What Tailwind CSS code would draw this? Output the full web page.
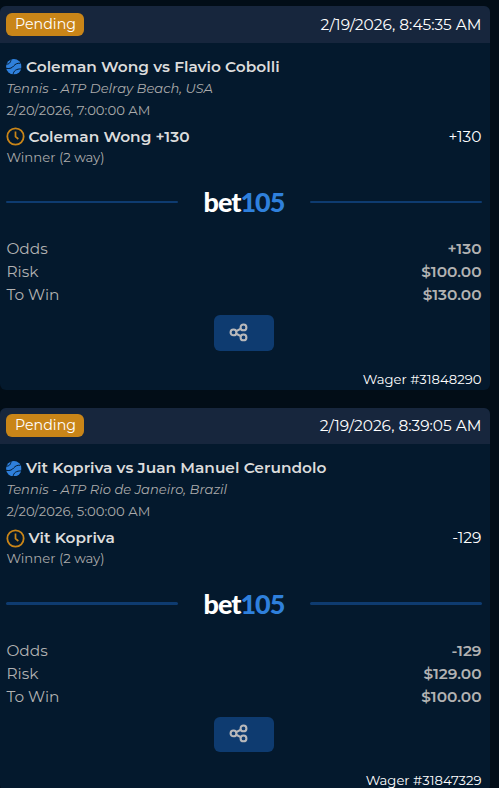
<!DOCTYPE html>
<html lang="en">
  <head>
    <meta charset="UTF-8" />
    <meta name="viewport" content="width=device-width, initial-scale=1.0" />
    <title>Pending wagers</title>
    <script src="https://cdn.jsdelivr.net/npm/@tailwindcss/browser@4"></script>
  </head>
  <body class="h-[788px] overflow-hidden bg-[#020d17] pt-1.5 font-[Montserrat,Inter,sans-serif] text-white">

    <!-- Shared icons -->
    <svg class="hidden">
      <symbol id="ball" viewBox="0 0 16 16">
        <circle cx="8" cy="8" r="7.9" fill="#2f80dc" />
        <path d="M0 5.2C3.2 5.6 5 3.6 5.2 0M0 9.6C4.6 10.4 6.4 8.8 8 7C9.6 5.2 11.4 4 14.8 4.4M7.4 16C7.4 12.4 10.6 9.8 16 10.2" fill="none" stroke="#04192d" stroke-width="1" />
      </symbol>
      <symbol id="clock" viewBox="0 0 20 20">
        <circle cx="10" cy="10" r="8.6" fill="none" stroke="#c98518" stroke-width="1.9" />
        <path d="M10 4.8V10.2L13 12.6" fill="none" stroke="#c98518" stroke-width="1.8" />
      </symbol>
      <symbol id="share" viewBox="0 0 20 20">
        <g fill="none" stroke="#b9b9bb" stroke-width="2.1">
          <circle cx="4.5" cy="10.4" r="2.9" />
          <circle cx="14.5" cy="5.4" r="2.9" />
          <circle cx="14.5" cy="15.4" r="2.9" />
          <path d="M7.2 9.1L11.8 6.7M7.2 11.7L11.8 14.1" />
        </g>
      </symbol>
    </svg>

    <!-- Wager 1 -->
    <article class="mb-[18px] h-[383.5px] w-[490px] overflow-hidden rounded-md bg-[#04192d]">
      <header class="flex h-[36.5px] items-center justify-between bg-[#17263d] pr-[8.5px] pl-1.5">
        <span class="flex h-[23px] w-[78px] items-center justify-center rounded-md bg-[#c98518] pl-px text-[14.2px]">Pending</span>
        <time class="text-[15.4px]">2/19/2026, 8:45:35 AM</time>
      </header>
      <section class="pt-[14px] pr-[8.5px] pl-[6.4px]">
        <div class="flex h-5 items-center gap-1">
          <svg class="mt-px size-[15.6px]"><use href="#ball" /></svg>
          <h2 class="text-[15.4px] font-semibold whitespace-nowrap text-[#dcdcdc]">Coleman Wong vs Flavio Cobolli</h2>
        </div>
        <p class="h-[22px] text-[13.1px] leading-[22px] text-[#ababab] italic">Tennis - ATP Delray Beach, USA</p>
        <p class="h-[22px] text-[13.2px] leading-[22px] text-[#ababab]">2/20/2026, 7:00:00 AM</p>
        <div class="mt-[5px] flex h-[22px] items-center">
          <svg class="mr-[3px] size-[19px]"><use href="#clock" /></svg>
          <strong class="text-[15.4px] font-semibold text-[#dcdcdc]">Coleman Wong +130</strong>
          <span class="ml-auto text-[15.4px]">+130</span>
        </div>
        <p class="h-5 text-[13.2px] leading-[19px] text-[#ababab]">Winner (2 way)</p>
        <div class="mt-[19.5px] flex h-[30px] items-center justify-between">
          <i class="h-0.5 w-[172px] rounded bg-[#0e3b70]"></i>
          <b class="font-[Lato,sans-serif] text-[27px] leading-[30px] font-black tracking-[-1px]">bet<span class="text-[#2f80dc]">105</span></b>
          <i class="h-0.5 w-[172px] rounded bg-[#0e3b70]"></i>
        </div>
        <dl class="mt-5 text-[15.4px] leading-[23px] text-[#b2b2b2]">
          <div class="flex justify-between"><dt>Odds</dt><dd class="font-semibold">+130</dd></div>
          <div class="flex justify-between"><dt>Risk</dt><dd class="font-semibold">$100.00</dd></div>
          <div class="flex justify-between"><dt>To Win</dt><dd class="font-semibold">$130.00</dd></div>
        </dl>
        <button class="mx-auto mt-[9px] flex h-9 w-15 rounded-md bg-[#0e3b70] pt-[7px] pl-[15px]" aria-label="Share">
          <svg class="size-5"><use href="#share" /></svg>
        </button>
        <p class="mt-[17.5px] text-right text-[13.2px] leading-5">Wager #31848290</p>
      </section>
    </article>

    <!-- Wager 2 -->
    <article class="h-[383.5px] w-[490px] overflow-hidden rounded-md bg-[#04192d]">
      <header class="flex h-[36.5px] items-center justify-between bg-[#17263d] pr-[8.5px] pl-1.5">
        <span class="flex h-[23px] w-[78px] items-center justify-center rounded-md bg-[#c98518] pl-px text-[14.2px]">Pending</span>
        <time class="text-[15.4px]">2/19/2026, 8:39:05 AM</time>
      </header>
      <section class="pt-[14px] pr-[8.5px] pl-[6.4px]">
        <div class="flex h-5 items-center gap-1">
          <svg class="mt-px size-[15.6px]"><use href="#ball" /></svg>
          <h2 class="text-[15.4px] font-semibold whitespace-nowrap text-[#dcdcdc]">Vit Kopriva vs Juan Manuel Cerundolo</h2>
        </div>
        <p class="h-[22px] text-[13.1px] leading-[22px] text-[#ababab] italic">Tennis - ATP Rio de Janeiro, Brazil</p>
        <p class="h-[22px] text-[13.2px] leading-[22px] text-[#ababab]">2/20/2026, 5:00:00 AM</p>
        <div class="mt-[5px] flex h-[22px] items-center">
          <svg class="mr-[3px] size-[19px]"><use href="#clock" /></svg>
          <strong class="text-[15.4px] font-semibold text-[#dcdcdc]">Vit Kopriva</strong>
          <span class="ml-auto text-[15.4px]">-129</span>
        </div>
        <p class="h-5 text-[13.2px] leading-[19px] text-[#ababab]">Winner (2 way)</p>
        <div class="mt-[19.5px] flex h-[30px] items-center justify-between">
          <i class="h-[2.5px] w-[172px] rounded bg-[#0e3b70]"></i>
          <b class="font-[Lato,sans-serif] text-[27px] leading-[29px] font-black tracking-[-1px]">bet<span class="text-[#2f80dc]">105</span></b>
          <i class="h-[2.5px] w-[172px] rounded bg-[#0e3b70]"></i>
        </div>
        <dl class="mt-5 text-[15.4px] leading-[23px] text-[#b2b2b2]">
          <div class="flex justify-between"><dt>Odds</dt><dd class="font-semibold">-129</dd></div>
          <div class="flex justify-between"><dt>Risk</dt><dd class="font-semibold">$129.00</dd></div>
          <div class="flex justify-between"><dt>To Win</dt><dd class="font-semibold">$100.00</dd></div>
        </dl>
        <button class="mx-auto mt-[9px] flex h-[35px] w-15 rounded-md bg-[#0e3b70] pt-[6px] pl-[15px]" aria-label="Share">
          <svg class="size-5"><use href="#share" /></svg>
        </button>
        <p class="mt-[18px] text-right text-[13.2px] leading-5">Wager #31847329</p>
      </section>
    </article>
  </body>
</html>
